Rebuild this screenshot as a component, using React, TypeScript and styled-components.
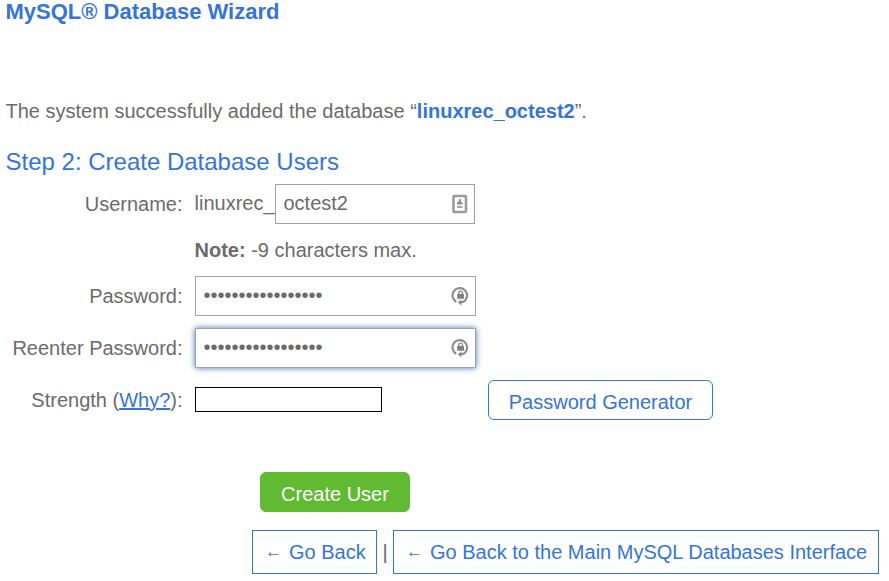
import React from 'react';
import styled, { createGlobalStyle, css } from 'styled-components';

const BLUE = '#3475d9';
const GREY = '#6b6b6b';

const GlobalStyle = createGlobalStyle`
  body {
    margin: 0;
    background: #fff;
    color: ${GREY};
    font-family: 'Liberation Sans', Arial, sans-serif;
    font-size: 20px;
    line-height: 24px;
    overflow: hidden;
  }
  * { box-sizing: border-box; }
`;

const Page = styled.main`
  width: 889px;
  height: 581px;
  padding-left: 5.5px;
  overflow: hidden;
`;

const Title = styled.h1`
  margin: 0;
  height: 99px;
  font-size: 22px;
  line-height: 24px;
  color: ${BLUE};
`;

const Message = styled.p`
  margin: 0 0 26px;
  b { color: ${BLUE}; }
`;

const StepTitle = styled.h2`
  margin: 0 0 9px;
  font-size: 24px;
  font-weight: 400;
  line-height: 26px;
  color: ${BLUE};
`;

const Form = styled.form`
  display: grid;
  grid-template-columns: 177px 1fr;
  grid-template-rows: 40px 28px 40px 40px 40px;
  column-gap: 12.5px;
  row-gap: 12px;
`;

const Label = styled.label`
  text-align: right;
  line-height: 40px;
  white-space: nowrap;
`;

const Cell = styled.div`
  display: flex;
  align-items: center;
`;

const Prefix = styled.span`
  width: 80px;
  line-height: 38px;
  height: 40px;
  text-indent: -0.5px;
`;

const Field = styled.div<{ $width: number; $focused?: boolean }>`
  display: flex;
  align-items: center;
  width: ${(p) => p.$width}px;
  height: 40px;
  padding: 0 7px 0 7.5px;
  border: 1px solid #a2a2a5;
  background: #fff;
  ${(p) =>
    p.$focused &&
    css`
      box-shadow: 0 0 6px #3f77ae;
    `}
`;

const Input = styled.input`
  flex: 1;
  min-width: 0;
  height: 38px;
  padding: 0 0 2px;
  border: 0;
  outline: 0;
  background: transparent;
  color: ${GREY};
  font: inherit;
`;

const Icon = styled.svg`
  flex: none;
  width: 18px;
  height: 22px;
  margin-right: -1px;
`;

const Note = styled.div`
  grid-column: 2;
  line-height: 28px;
  text-indent: -0.5px;
`;

const Link = styled.a`
  color: ${BLUE};
  text-decoration: underline;
`;

const Meter = styled.div`
  width: 187px;
  height: 25px;
  margin: 0 106px 1px 0;
  border: 1px solid #000;
`;

const Button = styled.button<{ $primary?: boolean }>`
  width: ${(p) => (p.$primary ? 150 : 225)}px;
  height: 40px;
  padding: 3px 0 0;
  border: 1px solid ${(p) => (p.$primary ? '#60bb33' : BLUE)};
  border-radius: 6px;
  background: ${(p) => (p.$primary ? '#60bb33' : '#fff')};
  color: ${(p) => (p.$primary ? '#fff' : BLUE)};
  font: inherit;
`;

const Actions = styled.div`
  padding: 52px 0 18px 254.5px;
  display: flex;
`;

const Footer = styled.nav`
  display: flex;
  padding-left: 246.5px;
  line-height: 42px;
`;

const BackLink = styled.a<{ $width: number }>`
  display: flex;
  width: ${(p) => p.$width}px;
  height: 44px;
  padding-left: 12px;
  border: 1px solid ${BLUE};
  color: ${BLUE};
  white-space: nowrap;
`;

const Arrow = styled.span`
  flex: none;
  width: 24px;
  font-size: 17px;
  line-height: 41px;
`;

const Divider = styled.span`
  width: 16px;
  text-align: center;
  line-height: 44px;
`;

const ContactIcon = () => (
  <Icon viewBox="0 0 18 22" fill="none">
    <rect x="3.500" y="3" width="12.500" height="16" rx="1" stroke="#9a9a9a" strokeWidth="2.600" />
    <path d="M9.750 6.200v5M7 10.300h5.500" stroke="#8a8a8a" strokeWidth="2.200" />
    <path d="M7 14h5.500" stroke="#aaa" strokeWidth="2.200" />
  </Icon>
);

const LockIcon = () => (
  <Icon viewBox="0 0 18 22" fill="none">
    <path d="M5.300 16.800A7.300 7.300 0 1 1 14.700 14.700Q13.300 17.200 9.500 17.300" stroke="#8c8c8c" strokeWidth="2.100" />
    <path d="M10.400 14.400 6.700 17.300l3.700 3.200Z" fill="#8c8c8c" />
    <rect x="6.200" y="9" width="6.800" height="4.800" rx=".5" fill="#808080" />
    <path d="M7.700 9.500V8.100a1.900 1.900 0 0 1 3.800 0V9.500" stroke="#858585" strokeWidth="1.300" />
  </Icon>
);

export default function App() {
  return (
    <Page>
      <GlobalStyle />
      <Title>MySQL® Database Wizard</Title>
      <Message>
        The system successfully added the database “<b>linuxrec_octest2</b>”.
      </Message>
      <StepTitle>Step 2: Create Database Users</StepTitle>
      <Form>
        <Label htmlFor="user">Username:</Label>
        <Cell>
          <Prefix>linuxrec_</Prefix>
          <Field $width={200}>
            <Input id="user" defaultValue="octest2" />
            <ContactIcon />
          </Field>
        </Cell>
        <Note>
          <b>Note:</b> -9 characters max.
        </Note>
        <Label htmlFor="password">Password:</Label>
        <Cell>
          <Field $width={281}>
            <Input id="password" type="password" defaultValue="12345678901234567" />
            <LockIcon />
          </Field>
        </Cell>
        <Label htmlFor="again">Reenter Password:</Label>
        <Cell>
          <Field $width={281} $focused>
            <Input id="again" type="password" defaultValue="12345678901234567" />
            <LockIcon />
          </Field>
        </Cell>
        <Label as="span">
          Strength (<Link>Why?</Link>):
        </Label>
        <Cell>
          <Meter />
          <Button type="button">Password Generator</Button>
        </Cell>
      </Form>
      <Actions>
        <Button $primary type="button">
          Create User
        </Button>
      </Actions>
      <Footer>
        <BackLink $width={125}>
          <Arrow>←</Arrow>Go Back
        </BackLink>
        <Divider>|</Divider>
        <BackLink $width={486}>
          <Arrow>←</Arrow>Go Back to the Main MySQL Databases Interface
        </BackLink>
      </Footer>
    </Page>
  );
}
